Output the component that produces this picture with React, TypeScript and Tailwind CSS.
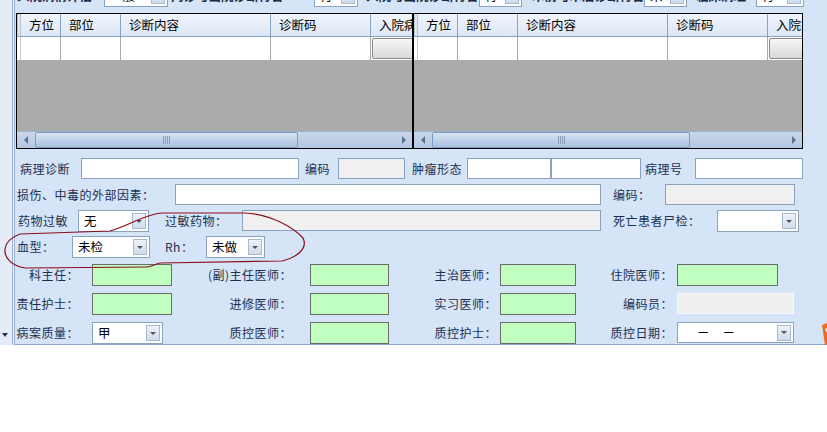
import React from "react";

const FONT = { fontFamily: '"Noto Sans CJK SC", "DejaVu Sans", sans-serif' };

const Label = ({ w, children, right, pl = 0, pr = 0 }: { w: number; children: React.ReactNode; right?: boolean; pl?: number; pr?: number }) => (
  <div
    className={`shrink-0 whitespace-nowrap text-[12px] tracking-[0.5px] text-[#1c2f4f] flex items-center ${right ? "justify-end" : ""}`}
    style={{ width: w, paddingLeft: pl, paddingRight: pr }}
  >
    {children}
  </div>
);

const Box = ({ w, kind = "white", h = 21 }: { w: number; kind?: "white" | "gray" | "green" | "pale"; h?: number }) => {
  const cls =
    kind === "green"
      ? "bg-[#c0ffc0] border-[#6b6b6b]"
      : kind === "gray"
      ? "bg-[#f0f0f0] border-[#8ba1c0]"
      : kind === "pale"
      ? "bg-[#efefef] border-[#f7f9fc]"
      : "bg-white border-[#8ba1c0]";
  return <div className={`shrink-0 border ${cls}`} style={{ width: w, height: h }} />;
};

const Combo = ({ w, value, h = 22 }: { w: number; value?: React.ReactNode; h?: number }) => (
  <div
    className="shrink-0 border border-[#8ba1c0] bg-white flex items-center justify-between pl-[5px] pr-[2px] text-[12.5px] text-black"
    style={{ width: w, height: h }}
  >
    <span className="whitespace-nowrap">{value}</span>
    <div className="w-[14px] h-[16px] border border-[#a9b9d1] bg-gradient-to-b from-[#eef2f8] to-[#cfdbeb] flex items-center justify-center">
      <div className="w-0 h-0 border-l-[3px] border-r-[3px] border-t-[3px] border-l-transparent border-r-transparent border-t-[#4b5568]" />
    </div>
  </div>
);

const Grid = ({ last, lastW }: { last: string; lastW: number }) => {
  const cols = [
    { t: "方位", w: 40 },
    { t: "部位", w: 60 },
    { t: "诊断内容", w: 150 },
    { t: "诊断码", w: 100 },
  ];
  const width = 4 + 350 + lastW;
  return (
    <div className="flex flex-col overflow-hidden" style={{ width }}>
      {/* header */}
      <div className="flex h-[23px] border-b border-[#8aa4c6] bg-gradient-to-b from-[#f1f5fc] to-[#dce7f6] text-[12.5px] text-black">
        <div className="w-[4px] shrink-0 border-x border-[#b8c2cf] bg-[#e4e8ee]" />
        {cols.map((c) => (
          <div key={c.t} className="shrink-0 border-r border-[#8aa4c6] flex items-center pl-[8px] whitespace-nowrap" style={{ width: c.w }}>
            {c.t}
          </div>
        ))}
        <div className="shrink-0 overflow-hidden" style={{ width: lastW }}>
          <div className="h-full flex items-center pl-[8px] whitespace-nowrap">{last}</div>
        </div>
      </div>
      {/* data row */}
      <div className="flex h-[23px] bg-white">
        <div className="w-[4px] shrink-0 border-r border-[#c8c8c8]" />
        {cols.map((c) => (
          <div key={c.t} className="shrink-0 border-r border-[#a8a8a8]" style={{ width: c.w }} />
        ))}
        <div className="shrink-0 pl-[1px] py-[1px] overflow-hidden" style={{ width: lastW }}>
          <div className="w-[60px] h-full rounded-[2px] border border-[#8a8a8a] bg-gradient-to-b from-[#f7f7f7] to-[#d9d9d9]" />
        </div>
      </div>
      <div className="h-[72px] bg-[#ababab]" />
      {/* scrollbar */}
      <div className="h-[17px] flex items-center bg-gradient-to-b from-[#c9d7ea] to-[#b4c7e1] border-t border-[#9db2cf]">
        <div className="w-[18px] shrink-0 flex items-center justify-center">
          <div className="w-0 h-0 border-t-[4px] border-b-[4px] border-r-[4px] border-t-transparent border-b-transparent border-r-[#5f7089]" />
        </div>
        <div className="h-[16px] rounded-[2px] border border-[#7d9bc3] bg-gradient-to-b from-[#d9e4f3] to-[#a9c0df] flex items-center justify-center gap-[1px]" style={{ width: Math.round(width * 0.665) }}>
          <div className="w-px h-[8px] bg-[#8d9fb8]" />
          <div className="w-px h-[8px] bg-[#8d9fb8]" />
          <div className="w-px h-[8px] bg-[#8d9fb8]" />
          <div className="w-px h-[8px] bg-[#8d9fb8]" />
        </div>
        <div className="flex-1" />
        <div className="w-[16px] shrink-0 flex items-center justify-center">
          <div className="w-0 h-0 border-t-[4px] border-b-[4px] border-l-[4px] border-t-transparent border-b-transparent border-l-[#5f7089]" />
        </div>
      </div>
    </div>
  );
};

const TopLabel = ({ w, pl, children }: { w: number; pl: number; children: React.ReactNode }) => (
  <div className="shrink-0 h-full flex items-center whitespace-nowrap overflow-hidden font-bold" style={{ width: w, paddingLeft: pl }}>
    {children}
  </div>
);

export default function App() {
  return (
    <div className="relative w-[827px] h-[432px] bg-white overflow-hidden" style={FONT}>
      <div className="flex h-[345px]">
        {/* left strip */}
        <div className="w-[12px] shrink-0 bg-[#e4ecf7] relative">
          <div className="absolute left-[2px] top-[333px] w-0 h-0 border-l-[3px] border-r-[3px] border-t-[4px] border-l-transparent border-r-transparent border-t-[#1f3560]" />
        </div>
        <div className="w-[3px] shrink-0 border-x border-[#9fb4d2] bg-[#e9f0f9]" />

        {/* main panel */}
        <div className="flex-1 bg-[#d5e4f7] border-b border-[#8aa6cc] overflow-hidden flex flex-col">
          {/* clipped top row */}
          <div className="h-[22px] -mt-[15px] flex items-center text-[12.5px] text-[#1a2a40]">
            <TopLabel w={89} pl={2}>入院病情评估</TopLabel>
            <Combo w={64} value="一般" />
            <TopLabel w={146} pl={3}>门诊与出院诊断符合</TopLabel>
            <Combo w={44} value="符" />
            <TopLabel w={121} pl={8}>入院与出院诊断符合</TopLabel>
            <Combo w={43} value="符" />
            <TopLabel w={122} pl={10}>术前与术后诊断符合</TopLabel>
            <Combo w={43} value="未" />
            <TopLabel w={69} pl={9}>临床病理</TopLabel>
            <Combo w={48} value="符" />
          </div>

          {/* grids */}
          <div className="mt-[6px] ml-[1px] w-[787px] h-[136px] border border-black flex">
            <Grid last="入院病情" lastW={41} />
            <div className="w-[2px] shrink-0 bg-black" />
            <Grid last="入院病情" lastW={34} />
          </div>

          {/* row 1 */}
          <div className="mt-[9px] h-[21px] flex">
            <Label w={66} pl={5}>病理诊断</Label>
            <Box w={218} />
            <Label w={39} pl={6}>编码</Label>
            <Box w={67} kind="gray" />
            <Label w={62} pl={7}>肿瘤形态</Label>
            <Box w={84} />
            <Box w={90} />
            <Label w={54} pl={4}>病理号</Label>
            <Box w={108} />
          </div>

          {/* row 2 */}
          <div className="mt-[5px] h-[21px] flex">
            <Label w={160} pl={2}>损伤、中毒的外部因素：</Label>
            <Box w={426} />
            <Label w={64} pl={12}>编码：</Label>
            <Box w={130} kind="gray" />
          </div>

          {/* row 3 */}
          <div className="mt-[5px] h-[22px] flex">
            <Label w={63} pl={3}>药物过敏</Label>
            <Combo w={71} value="无" />
            <Label w={93} pl={16}>过敏药物：</Label>
            <Box w={359} kind="gray" />
            <Label w={116} pl={12}>死亡患者尸检：</Label>
            <Combo w={82} />
          </div>

          {/* row 4 */}
          <div className="mt-[4px] h-[22px] flex">
            <Label w={57} pl={2}>血型：</Label>
            <Combo w={78} value="未检" />
            <Label w={56} pl={15}>Rh：</Label>
            <Combo w={59} value="未做" />
          </div>

          {/* row 5 */}
          <div className="mt-[6px] h-[22px] flex">
            <Label w={77} right pr={13}>科主任：</Label>
            <Box w={80} kind="green" h={22} />
            <Label w={138} right pr={18}>(副)主任医师：</Label>
            <Box w={79} kind="green" h={22} />
            <Label w={111} right pr={3}>主治医师：</Label>
            <Box w={76} kind="green" h={22} />
            <Label w={101} right pr={4}>住院医师：</Label>
            <Box w={101} kind="green" h={22} />
          </div>

          {/* row 6 */}
          <div className="mt-[7px] h-[22px] flex">
            <Label w={77} right pr={13}>责任护士：</Label>
            <Box w={80} kind="green" h={22} />
            <Label w={138} right pr={18}>进修医师：</Label>
            <Box w={79} kind="green" h={22} />
            <Label w={111} right pr={3}>实习医师：</Label>
            <Box w={76} kind="green" h={22} />
            <Label w={101} right pr={4}>编码员：</Label>
            <Box w={117} kind="pale" h={21} />
          </div>

          {/* row 7 */}
          <div className="mt-[7px] h-[22px] flex">
            <Label w={77} right pr={13}>病案质量：</Label>
            <Combo w={71} value="甲" />
            <div className="w-[9px] shrink-0" />
            <Label w={138} right pr={18}>质控医师：</Label>
            <Box w={79} kind="green" h={22} />
            <Label w={111} right pr={3}>质控护士：</Label>
            <Box w={76} kind="green" h={22} />
            <Label w={101} right pr={4}>质控日期：</Label>
            <Combo w={117} h={21} value={<span className="pl-[14px] tracking-[13px]">－－</span>} />
          </div>
        </div>
      </div>

      {/* hand-drawn red ellipse */}
      <svg className="absolute left-0 top-0 pointer-events-none" width="827" height="432">
        <path
          d="M 20 234 L 110 231 C 128 226, 145 214, 162 213 L 245 213 C 270 214, 293 227, 303 238 C 308 248, 298 257, 282 261 L 160 263 C 154 264, 153 267, 146 267 L 25 268 C 12 266, 4 258, 5 249 C 6 241, 12 237, 20 234 Z"
          fill="none"
          stroke="#8b0d1a"
          strokeWidth="1.2"
        />
      </svg>

      {/* orange corner mark */}
      <svg className="absolute left-[819px] top-[323px]" width="8" height="24">
        <path d="M 3 2 L 8 0 L 8 22 L 6 22 C 5 16, 4 8, 3 2 Z" fill="#f26a1b" />
        <path d="M 6 6 L 8 5 L 8 10 Z" fill="#ffffff" />
      </svg>
    </div>
  );
}
